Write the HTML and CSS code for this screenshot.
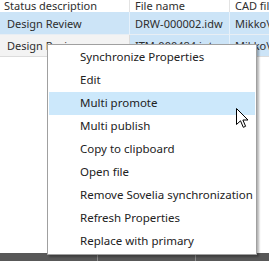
FILE: index.html
```html
<!DOCTYPE html>
<html lang="en">
<head>
    <meta charset="UTF-8">
    <title>Documents grid</title>
    <link rel="stylesheet" href="styles.css">
</head>
<body>
    <div class="screen">
        <div class="grid">
            <div class="row header">
                <div class="cell col-status">Status description</div>
                <div class="cell col-file">File name</div>
                <div class="cell col-cad">CAD file</div>
            </div>
            <div class="row selected">
                <div class="cell col-status">Design Review</div>
                <div class="cell col-file">DRW-000002.idw</div>
                <div class="cell col-cad">Mikko\Vault\Designs</div>
            </div>
            <div class="row partial">
                <div class="cell col-status current">Design Review</div>
                <div class="cell col-file">ITM-000484.ipt</div>
                <div class="cell col-cad">Mikko\Vault\Designs</div>
            </div>
        </div>

        <div class="statusbar">
            <div class="status-part">Design Review</div>
            <div class="status-part">2 items</div>
        </div>

        <ul class="context-menu">
            <li>Synchronize Properties</li>
            <li>Edit</li>
            <li class="hover">Multi promote</li>
            <li>Multi publish</li>
            <li>Copy to clipboard</li>
            <li>Open file</li>
            <li>Remove Sovelia synchronization</li>
            <li>Refresh Properties</li>
            <li>Replace with primary</li>
        </ul>

        <!-- mouse pointer -->
        <svg class="cursor" width="13" height="21" viewBox="0 0 13 21">
            <path d="M0.5 0.5 L0.5 16.5 L4.5 12.8 L7.3 19.3 L9.6 18.3 L6.9 12 L12 12 Z" fill="#fff" stroke="#000" stroke-width="1" stroke-linejoin="miter"/>
        </svg>
    </div>
</body>
</html>
```

FILE: styles.css
```css
body {
    margin: 0;
    background-color: #ffffff;
}
.screen {
    position: relative;
    width: 269px;
    height: 261px;
    overflow: hidden;
    display: flex;
    flex-direction: column;
    justify-content: space-between;
    font-family: "Noto Sans", "Open Sans", sans-serif;
    font-size: 11px;
    color: #2e2e2e;
}
.grid {
    display: flex;
    flex-direction: column;
}
.row {
    display: flex;
    white-space: nowrap;
}
.cell {
    flex: none;
    overflow: hidden;
    border-right: 1px solid #e3e3e3;
    box-sizing: border-box;
}
.col-status {
    width: 130px;
    padding-left: 7px;
}
.col-file {
    width: 100px;
    padding-left: 5px;
}
.col-cad {
    width: 60px;
    padding-left: 5px;
    border-right: none;
}
.header .cell {
    height: 12px;
    line-height: 11px;
    background-color: #ffffff;
}
.header .col-status {
    padding-left: 4px;
}
.selected .cell {
    height: 23px;
    padding-top: 2px;
    line-height: 20px;
    background-color: #cce4f7;
    border-right-color: #e6f1fb;
    border-bottom: 1px solid #e8eef4;
}
.partial .cell {
    height: 22px;
    line-height: 21px;
    background-color: #cce4f7;
    border-right-color: #e6f1fb;
    border-bottom: 1px solid #dcdcdc;
}
.partial .current {
    background-color: #f3f3f3;
    border-right-color: #dcdcdc;
}
.statusbar {
    display: flex;
    height: 8px;
    background-color: #585858;
    color: #ffffff;
    font-size: 11px;
    line-height: 30px;
    overflow: hidden;
    white-space: nowrap;
}
.status-part {
    width: 98px;
    padding-left: 4px;
    box-sizing: border-box;
    border-right: 1px solid #8a8a8a;
}
.context-menu {
    position: absolute;
    left: 47px;
    top: 44px;
    width: 206px;
    margin: 0;
    padding: 1px 1px;
    list-style: none;
    background-color: #ffffff;
    border: 1px solid #a0a0a0;
    box-shadow: 2px 2px 2px rgba(0, 0, 0, 0.3);
    font-size: 11.5px;
    color: #222222;
}
.context-menu li {
    height: 23px;
    line-height: 22px;
    padding-left: 31px;
    white-space: nowrap;
}
.context-menu li.hover {
    background-color: #cce8fb;
}
.cursor {
    position: absolute;
    left: 236px;
    top: 108px;
}
```
